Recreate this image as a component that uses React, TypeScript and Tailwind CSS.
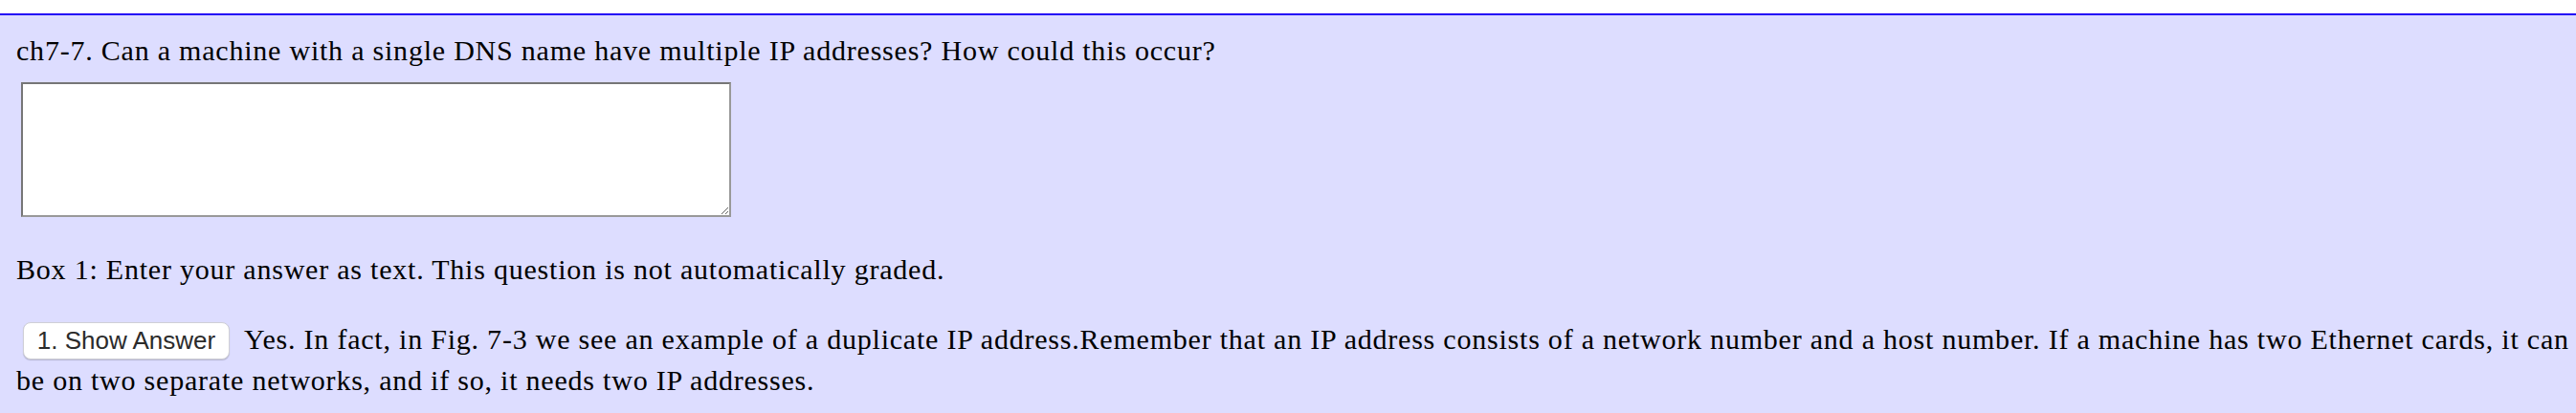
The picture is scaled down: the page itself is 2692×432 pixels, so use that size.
import React from "react";

export default function App() {
  return (
    <div className="min-h-screen bg-white pt-[14px]">
      <div
        className="min-h-[418px] border-t-2 border-[#2200f5] bg-[#ddddff] pl-[17px] pr-0 pt-[21px] text-[30px] leading-[32px] tracking-[0.78px] text-black"
        style={{ fontFamily: '"Liberation Serif", "Times New Roman", serif' }}
      >
        <p>ch7-7. Can a machine with a single DNS name have multiple IP addresses? How could this occur?</p>

        {/* answer box */}
        <textarea
          className="mt-[17px] ml-[5px] block h-[141px] w-[742px] resize border-2 border-t-[#767676] border-l-[#767676] border-r-[#999999] border-b-[#999999] bg-white"
          aria-label="Box 1"
        />

        <p className="mt-[39px]">Box 1: Enter your answer as text. This question is not automatically graded.</p>

        <p className="mt-[35px] leading-[43px]">
          <button
            className="mr-[15px] ml-[7px] inline-block h-[39px] w-[216px] rounded-[8px] border border-[#cfcfd6] bg-white text-center align-baseline text-[26px] leading-[37px] tracking-normal text-[#2b2b2b] shadow-[0_1px_1px_rgba(0,0,0,0.18)]"
            style={{ fontFamily: '"Liberation Sans", Arial, sans-serif' }}
          >
            1. Show Answer
          </button>
          Yes. In fact, in Fig. 7-3 we see an example of a duplicate IP address.Remember that an IP address consists of a network number and a host number. If a machine has two Ethernet cards, it can be on two separate networks, and if so, it needs two IP addresses.
        </p>
      </div>
    </div>
  );
}
